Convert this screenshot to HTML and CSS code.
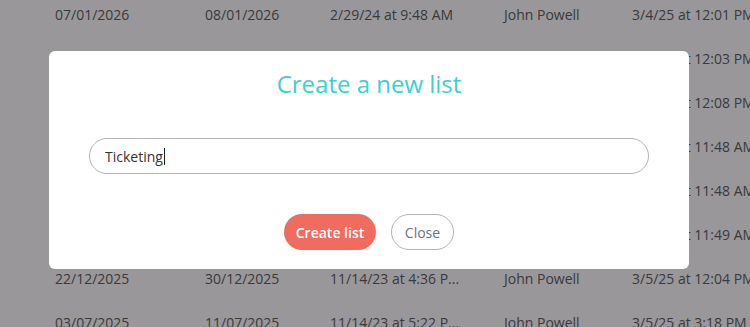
FILE: index.html
```html
<!DOCTYPE html>
<html>
<head>
<meta charset="utf-8">
<link rel="stylesheet" href="styles.css">
</head>
<body>
<div class="table">
  <div class="row"><span>07/01/2026</span><span>08/01/2026</span><span class="trunc">2/29/24 at 9:48 AM</span><span>John Powell</span><span>3/4/25 at 12:01 PM</span></div>
  <div class="row"><span>07/01/2026</span><span>08/01/2026</span><span class="trunc">2/29/24 at 9:48 AM</span><span>John Powell</span><span>3/4/25 at 12:03 PM</span></div>
  <div class="row"><span>07/01/2026</span><span>08/01/2026</span><span class="trunc">2/29/24 at 9:48 AM</span><span>John Powell</span><span>3/4/25 at 12:08 PM</span></div>
  <div class="row"><span>07/01/2026</span><span>08/01/2026</span><span class="trunc">2/29/24 at 9:48 AM</span><span>John Powell</span><span>3/5/25 at 11:48 AM</span></div>
  <div class="row"><span>07/01/2026</span><span>08/01/2026</span><span class="trunc">2/29/24 at 9:48 AM</span><span>John Powell</span><span>3/5/25 at 11:48 AM</span></div>
  <div class="row"><span>07/01/2026</span><span>08/01/2026</span><span class="trunc">2/29/24 at 9:48 AM</span><span>John Powell</span><span>3/5/25 at 11:49 AM</span></div>
  <div class="row"><span>22/12/2025</span><span>30/12/2025</span><span class="trunc">11/14/23 at 4:36 P...</span><span>John Powell</span><span>3/5/25 at 12:04 PM</span></div>
  <div class="row"><span>03/07/2025</span><span>11/07/2025</span><span class="trunc">11/14/23 at 5:22 P...</span><span>John Powell</span><span>3/5/25 at 3:18 PM</span></div>
</div>
<div class="modal">
  <h2 class="title">Create a new list</h2>
  <div class="field"><span class="value">Ticketing</span><span class="caret"></span></div>
  <div class="actions">
    <button class="btn primary">Create list</button>
    <button class="btn ghost">Close</button>
  </div>
</div>
</body>
</html>
```
FILE: styles.css
```css
html, body {
  margin: 0;
  padding: 0;
  width: 750px;
  height: 327px;
  overflow: hidden;
  background: #99979a;
  font-family: "Open Sans", "Liberation Sans", sans-serif;
}
.table {
  margin-top: -8px;
  padding-left: 55px;
  color: #3a393b;
  font-size: 14px;
}
.row {
  display: grid;
  grid-template-columns: 150px 125px 174px 128px 200px;
  height: 44px;
  align-items: center;
  white-space: nowrap;
}
.trunc {
  overflow: hidden;
}
.modal {
  position: absolute;
  left: 49px;
  top: 51px;
  width: 640px;
  height: 218px;
  background: #fff;
  border-radius: 6px;
  display: flex;
  flex-direction: column;
  align-items: center;
  box-sizing: border-box;
  padding-top: 17px;
}
.title {
  margin: 0;
  font-weight: 500;
  font-size: 24px;
  line-height: 32px;
  color: #3ccfd0;
}
.field {
  margin-top: 38px;
  width: 560px;
  height: 36px;
  box-sizing: border-box;
  border: 1px solid #b4b4b4;
  border-radius: 18px;
  display: flex;
  align-items: center;
  padding-left: 15px;
  font-size: 14px;
  color: #333;
}
.caret {
  width: 1px;
  height: 17px;
  background: #222;
  margin-left: 1px;
}
.actions {
  margin-top: 40px;
  display: flex;
  gap: 15px;
}
.btn {
  height: 36px;
  border-radius: 18px;
  font-family: inherit;
  font-size: 14px;
  padding: 0;
  white-space: nowrap;
  box-sizing: border-box;
  cursor: pointer;
}
.primary {
  background: #ee6c60;
  color: #fff;
  border: none;
  width: 92px;
  font-weight: 600;
}
.ghost {
  background: #fff;
  color: #6b7280;
  border: 1px solid #b4b4b4;
  width: 63px;
}
```
